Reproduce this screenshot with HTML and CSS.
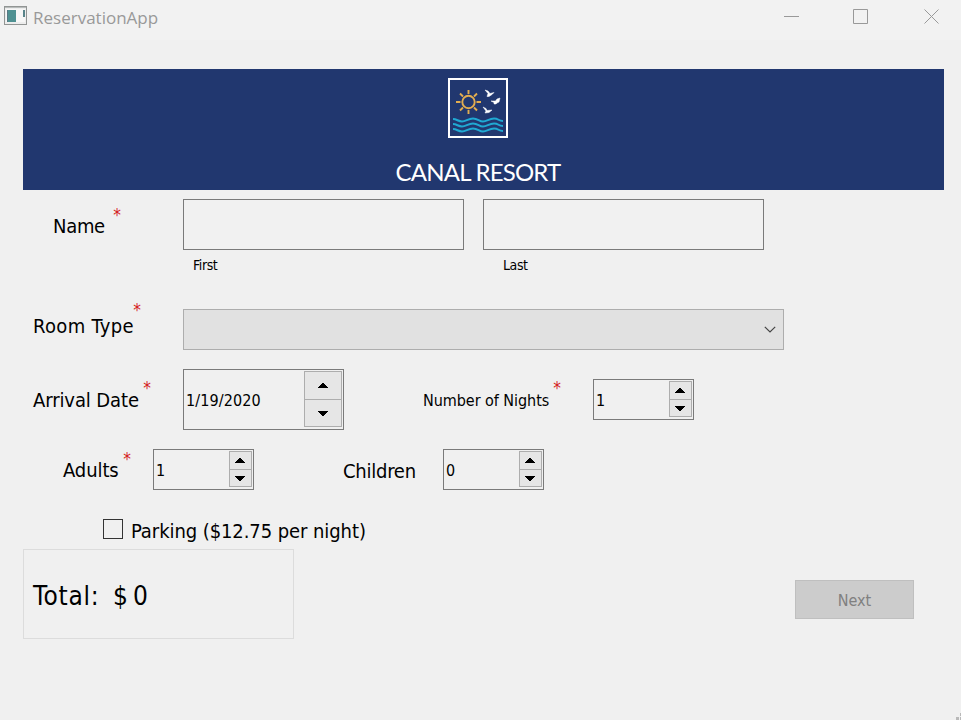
FILE: index.html
```html
<!DOCTYPE html>
<html lang="en">
<head>
<meta charset="utf-8">
<title>ReservationApp</title>
<link rel="stylesheet" href="styles.css">
</head>
<body>
<svg width="0" height="0" class="defs" aria-hidden="true">
  <symbol id="up" viewBox="0 0 10 5"><path d="M0 5V4H1V3H2V2H3V1H4V0H6V1H7V2H8V3H9V4H10V5Z"/></symbol>
  <symbol id="down" viewBox="0 0 10 5"><path d="M0 0V1H1V2H2V3H3V4H4V5H6V4H7V3H8V2H9V1H10V0Z"/></symbol>
</svg>
<header class="titlebar">
  <svg class="app-icon" width="24" height="20" viewBox="0 0 24 20" shape-rendering="crispEdges">
    <rect x=".5" y=".5" width="22" height="18" rx="1" fill="#ededed" stroke="#929594"/>
    <path d="M1 1.5H22" stroke="#b8bcbb"/>
    <rect x="2" y="3" width="19" height="13" fill="#f7f7f7"/>
    <rect x="3" y="4" width="9" height="12" fill="#4f9192"/>
    <rect x="3" y="4" width="1" height="12" fill="#5a7884"/>
    <rect x="19" y="4" width="2" height="7" fill="#58848a"/>
  </svg>
  <span class="app-title">ReservationApp</span>
  <svg class="controls" width="156" height="16" viewBox="0 0 156 16" fill="none" stroke="#999">
    <path d="M0 7.5H15M69.500 .5H83.500V14.500H69.500Z"/>
    <path d="M140.500 .5L154.500 14.500M154.500 .5L140.500 14.500"/>
  </svg>
</header>
<main class="form">
  <section class="banner">
    <svg width="60" height="60" viewBox="0 0 60 60" fill="none">
      <rect x="1" y="1" width="58" height="58" stroke="#fff" stroke-width="2"/>
      <g stroke="#e2ad50" stroke-width="1.900">
        <circle cx="20.500" cy="24" r="6.200"/>
        <path d="M20.500 12V16M20.500 32V36M8 24H12.500M28.500 24H33M12 15.500L15 18.500M26 29.500L29 32.500M29 15.500L26 18.500M15 29.500L12 32.500"/>
      </g>
      <g fill="#fff" stroke="#fff" stroke-width=".5">
        <path d="M37 12L40 13L42 15.500L46 14.500L44 16.500L41 18.500H39L40 15.500Z"/>
        <path d="M43 23L47.500 23L49 21L52 20L51 24L49 25L48 26H46L46 24.500Z"/>
        <path d="M35 29L38 30.500L39 32.500L44 32L41 34.500L37 35L38 33Z"/>
      </g>
      <g stroke="#20a9d3" stroke-width="2">
        <path d="M5 41C9 41 10 43.500 14 43.500S20 40.500 25 40.500S31 43.500 35 43.500S41 40.500 46 40.500S50 43 55 43"/>
        <path d="M5 46C9 46 10 48.500 14 48.500S20 45.500 25 45.500S31 48.500 35 48.500S41 45.500 46 45.500S50 48 55 48"/>
        <path d="M5 51C9 51 10 53.500 14 53.500S20 50.500 25 50.500S31 53.500 35 53.500S41 50.500 46 50.500S50 53 55 53"/>
      </g>
    </svg>
    <h1 class="brand">CANAL RESORT</h1>
  </section>

  <div class="row name-row">
    <div class="label name-label"><span>Name</span><i class="star">*</i></div>
    <div class="input"></div>
    <div class="input"></div>
  </div>
  <div class="row captions"><span class="caption">First</span><span class="caption">Last</span></div>

  <div class="row room-row">
    <div class="label room-label"><span>Room Type</span><i class="star">*</i></div>
    <div class="select"><svg width="12" height="7" viewBox="0 0 12 7" fill="none" stroke="#444" stroke-width="1.200"><path d="M.8 .8L6 6L11.200 .8"/></svg></div>
  </div>

  <div class="row date-row">
    <div class="label date-label"><span>Arrival Date</span><i class="star">*</i></div>
    <div class="spin date"><span class="date-value">1/19/2020</span><div class="steps"><b><svg><use href="#up"/></svg></b><b><svg><use href="#down"/></svg></b></div></div>
    <div class="label nights-label"><span>Number of Nights</span><i class="star">*</i></div>
    <div class="spin"><span>1</span><div class="steps"><b><svg><use href="#up"/></svg></b><b><svg><use href="#down"/></svg></b></div></div>
  </div>

  <div class="row guests-row">
    <div class="label adults-label"><span>Adults</span><i class="star">*</i></div>
    <div class="spin"><span>1</span><div class="steps"><b><svg><use href="#up"/></svg></b><b><svg><use href="#down"/></svg></b></div></div>
    <div class="label children-label"><span>Children</span></div>
    <div class="spin"><span>0</span><div class="steps"><b><svg><use href="#up"/></svg></b><b><svg><use href="#down"/></svg></b></div></div>
  </div>

  <div class="row parking"><span class="box"></span><span class="parking-text">Parking ($12.75 per night)</span></div>

  <div class="row footer">
    <div class="total"><span class="total-text">Total:</span><span>$</span><span>0</span></div>
    <div class="next">Next</div>
  </div>
</main>
<svg class="grip" width="5" height="7" viewBox="0 0 5 7" fill="#b9b9b9" shape-rendering="crispEdges"><path d="M0 4H3V7H0ZM4 0H5V3H4ZM4 4H5V7H4Z"/></svg>
</body>
</html>
```
FILE: styles.css
```css
* { box-sizing: border-box; }
body {
  margin: 0;
  width: 961px;
  height: 720px;
  overflow: hidden;
  background: #f0f0f0;
  color: #000;
  font: 20px/24px "DejaVu Sans Condensed", "DejaVu Sans", sans-serif;
  font-stretch: condensed;
}
.defs { position: absolute; }
.titlebar {
  display: flex;
  height: 40px;
  padding: 6px 21px 0 4px;
  background: #f2f2f2;
}
.app-title {
  margin: 0 auto 0 5px;
  color: #999;
  font: 17px/24px "Open Sans", sans-serif;
}
.controls { margin-top: 3px; }
.form { padding: 29px 17px 0 23px; }
.banner {
  display: flex;
  flex-direction: column;
  align-items: center;
  height: 121px;
  padding: 9px 11px 0 0;
  background: #21376f;
}
.brand {
  margin: 19px 0 0;
  color: #fff;
  font: 24px/30px Lato, sans-serif;
  letter-spacing: -0.8px;
  white-space: nowrap;
}
.row { display: flex; }
.label {
  position: relative;
  display: flex;
  align-items: center;
  flex: none;
  white-space: nowrap;
}
.star {
  position: absolute;
  top: 0;
  right: 0;
  width: 10px;
  color: #d42020;
  font-size: 17px;
  line-height: 16px;
  font-style: normal;
  text-align: center;
  letter-spacing: 0;
}
.input {
  width: 281px;
  height: 51px;
  border: 1px solid #7a7a7a;
  background: #f1f1f1;
}
.name-row { margin-top: 9px; }
.name-label { width: 160px; padding: 3px 0 0 30px; letter-spacing: -0.3px; }
.name-label .star { top: 8px; right: 61px; }
.input + .input { margin-left: 19px; }
.captions { height: 30px; padding-left: 170px; font-size: 14px; line-height: 30px; letter-spacing: -0.4px; }
.caption { width: 310px; }
.room-row { margin-top: 29px; height: 41px; }
.room-label { width: 160px; padding: 0 0 7px 10px; letter-spacing: 0.35px; }
.room-label .star { top: -7px; right: 41px; }
.select {
  display: flex;
  align-items: center;
  justify-content: flex-end;
  width: 601px;
  height: 41px;
  padding-right: 7px;
  border: 1px solid #adadad;
  background: #e1e1e1;
}
.date-row { align-items: center; margin-top: 19px; height: 61px; }
.date-label { width: 160px; height: 61px; padding: 1px 0 0 10px; letter-spacing: -0.1px; }
.date-label .star { top: 11px; right: 31px; }
.spin {
  display: flex;
  justify-content: space-between;
  flex: none;
  width: 101px;
  height: 41px;
  padding: 1px 1px 2px 2px;
  border: 1px solid #7a7a7a;
  font-size: 16px;
  line-height: 40px;
}
.date { width: 161px; height: 61px; }
.date .steps { width: 38px; }
.date-value { line-height: 60px; letter-spacing: 0.1px; }
.steps {
  display: flex;
  flex-direction: column;
  width: 23px;
  border: 1px solid #adadad;
  background: #e6e6e6;
}
.steps b { display: flex; flex: 1; align-items: center; justify-content: center; padding: 0 1px 1px 0; }
.steps b + b { padding-bottom: 0; border-top: 1px solid #adadad; }
.steps svg { width: 10px; height: 5px; }
.nights-label { width: 249px; height: 61px; padding: 2px 0 0 79px; font-size: 16px; letter-spacing: -0.05px; }
.nights-label .star { top: 11px; right: 31px; }
.guests-row { margin-top: 19px; height: 41px; }
.adults-label { width: 130px; padding-left: 40px; letter-spacing: -0.1px; }
.adults-label .star { top: 2px; right: 21px; }
.children-label { width: 189px; padding: 2px 0 0 89px; letter-spacing: -0.25px; }
.parking { align-items: center; height: 20px; margin: 29px 0 0 80px; }
.box { width: 20px; height: 20px; border: 1px solid #333; }
.parking-text { margin: 3px 0 0 8px; letter-spacing: -0.08px; }
.footer { justify-content: space-between; margin-top: 10px; padding-right: 30px; }
.total {
  display: flex;
  align-items: center;
  width: 271px;
  height: 90px;
  padding: 4px 0 0 9px;
  border: 1px solid #dcdcdc;
  font-size: 26px;
}
.total-text { width: 80px; letter-spacing: 0.7px; }
.total-text + span { width: 20px; }
.next {
  width: 119px;
  height: 39px;
  margin-top: 31px;
  border: 1px solid #bfbfbf;
  background: #ccc;
  color: #808080;
  font-size: 16px;
  line-height: 39px;
  text-align: center;
}
.grip { position: absolute; right: 0; bottom: 0; }
```
